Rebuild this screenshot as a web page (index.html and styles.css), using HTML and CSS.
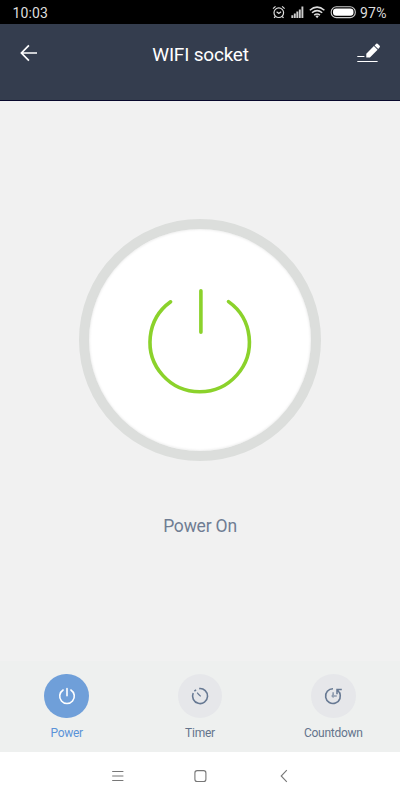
FILE: index.html
```html
<!DOCTYPE html>
<html lang="en">
<head>
  <meta charset="UTF-8" />
  <meta name="viewport" content="width=device-width, initial-scale=1.0"/>
  <title>WIFI socket</title>
  <link rel="stylesheet" href="styles.css">
</head>
<body>

  <div class="status-bar">
    <span class="time">10:03</span>
    <svg class="status-icons" width="84" height="24" viewBox="272 0 84 24" fill="none" stroke="#ddd">
      <!-- alarm -->
      <circle cx="278.8" cy="12.7" r="4.8" stroke-width="1.2"/>
      <path d="M276.6 11.7l2.2 1.8 2.3-1.8M273 8.6l2.5-2.2M284.6 8.6l-2.5-2.2M275.3 16.5l-1.2 1.4M282.3 16.5l1.2 1.4" stroke-width="1.2"/>
      <!-- signal -->
      <path d="M292.3 18v-2.7M294.8 18v-4.4M297.3 18v-6.4M299.8 18v-8.6M302.4 18V6.5" stroke="#ccc" stroke-width="1.9"/>
      <!-- wifi -->
      <path d="M309.8 10.3q7.3-6.4 14.6 0M312 12.8q5.1-4.4 10.2 0M314.2 15.2q2.9-2.4 5.8 0" stroke-width="1.5"/>
      <path d="M315.4 16.1q1.7-1.2 3.4 0l-1.7 2.1z" fill="#ddd" stroke="none"/>
      <!-- battery -->
      <rect x="331.2" y="6.8" width="24.1" height="10.8" rx="5.2" stroke="#ccc" stroke-width="1.1"/>
      <rect x="333" y="8.6" width="20.5" height="7.2" rx="3.2" fill="#fff" stroke="none"/>
    </svg>
    <span class="battery">97%</span>
  </div>

  <div class="header">
    <svg class="back" width="20" height="20" viewBox="0 0 20 20" fill="none" stroke="#fff" stroke-width="1.7">
      <path d="M9.9 2.3L2.4 10l7.5 7.7M2.6 10H18"/>
    </svg>
    <h1 class="title">WIFI socket</h1>
    <svg class="edit" width="26" height="24" viewBox="356 41 26 24" fill="#fff">
      <path d="M366.3 57.5v-3.8l7.6-7.7 3.7 3.7-7.7 7.8zM374.6 45.4l1.6-1.7q.7-.6 1.4 0l2.1 2.1q.6.7 0 1.4l-1.5 1.7z"/>
      <path d="M357.3 56h7.1v1.1h-7.1zM357.3 60.9h20.3V62h-20.3z"/>
    </svg>
  </div>

  <div class="main">
    <div class="power-button">
      <svg width="222" height="222" viewBox="89 229 222 222" fill="none" stroke="#8bd22b" stroke-width="3.6" stroke-linecap="round">
        <path d="M170.6 301.8A49.7 49.7 0 1 0 228.5 301.6M200.9 290.7V332.2"/>
      </svg>
    </div>
    <p class="power-state">Power On</p>
  </div>

  <div class="tabs">
    <div class="tab active">
      <div class="tab-icon">
        <svg width="24" height="24" viewBox="0 0 24 24" fill="none" stroke="#fff" stroke-width="1.6" stroke-linecap="round">
          <path d="M8.1 6A7.3 7.3 0 1 0 15.9 6M12 4.6V11.8"/>
        </svg>
      </div>
      <span>Power</span>
    </div>
    <div class="tab">
      <div class="tab-icon">
        <svg width="24" height="24" viewBox="0 0 24 24" fill="none" stroke="#677993" stroke-width="1.6">
          <path d="M11.2 4.6A7.5 7.5 0 1 1 5.2 9M6.4 7.3L8 5.7"/>
          <path d="M9.2 8.6l1.3 1.7 2.2 2.1" stroke-width="1.2"/>
        </svg>
      </div>
      <span>Timer</span>
    </div>
    <div class="tab">
      <div class="tab-icon">
        <svg width="24" height="24" viewBox="0 0 24 24" fill="none" stroke="#677993" stroke-width="1.6">
          <path d="M12 4.7A7.4 7.4 0 1 0 18.4 8.4"/>
          <path d="M16 10.2V5.6h4.8M16.2 5.8l3 3.8" stroke-width="1.5"/>
          <path d="M12.1 8.2v2.6M13.5 12h2.3" stroke-width="1.1"/>
          <circle cx="12.1" cy="12" r="1.1" stroke-width=".9"/>
        </svg>
      </div>
      <span>Countdown</span>
    </div>
  </div>

  <div class="nav-bar">
    <svg width="14" height="14" viewBox="0 0 14 14" fill="none" stroke="#777" stroke-width="1">
      <path d="M1.2 2.5h11.2M1.2 7h11.2M1.2 11.5h11.2"/>
    </svg>
    <svg width="14" height="14" viewBox="0 0 14 14" fill="none" stroke="#777" stroke-width="1.1">
      <rect x="0.9" y="1.6" width="11" height="10.9" rx="2.3"/>
    </svg>
    <svg width="14" height="14" viewBox="0 0 14 14" fill="none" stroke="#777" stroke-width="1.1">
      <path d="M10.8 1.2L5.2 7l5.6 5.8"/>
    </svg>
  </div>

</body>
</html>
```
FILE: styles.css
```css
* { margin: 0; padding: 0; box-sizing: border-box; font-family: Roboto, sans-serif; }
body {
  background: #f1f1f1;
  height: 100vh;
  display: flex;
  flex-direction: column;
  overflow: hidden;
}
svg {
  display: block;
  flex: none;
}
.status-bar {
  height: 24px;
  background: #000;
  color: #ddd;
  display: flex;
  align-items: center;
  padding: 1px 12px 0 12.5px;
  font-size: 14px;
}
.time {
  flex: 1;
  letter-spacing: 0.15px;
}
.status-icons {
  margin-top: -1px;
}
.battery {
  width: 28px;
  margin-left: 4px;
  letter-spacing: 0.2px;
}
.header {
  height: 77px;
  background: #343d4e;
  border-bottom: 1px solid #08082c;
  display: flex;
  align-items: flex-start;
  justify-content: space-between;
  padding: 17px 18px 0 19px;
}
.back {
  margin: 2px 6px 0 0;
}
.title {
  color: #fff;
  font-size: 19px;
  font-weight: 400;
  letter-spacing: -0.2px;
  line-height: 27px;
}
.main {
  flex: 1;
  display: flex;
  flex-direction: column;
  align-items: center;
  padding-top: 118px;
}
.power-button {
  width: 242px;
  height: 242px;
  border: 10px solid #dcdedc;
  border-radius: 50%;
  background: #fff;
  box-shadow: inset 0 0 3px rgba(0,0,0,0.12);
}
.power-state {
  margin-top: 54px;
  font-size: 17.5px;
  letter-spacing: -0.2px;
  line-height: 22px;
  color: #6f7d93;
}
.tabs {
  height: 91px;
  background: #eef0ef;
  display: flex;
  padding-top: 12.5px;
}
.tab {
  flex: 1;
  display: flex;
  flex-direction: column;
  align-items: center;
  font-size: 12px;
  letter-spacing: -0.25px;
  line-height: 16px;
  color: #64748c;
}
.tab-icon {
  width: 44.5px;
  height: 44.5px;
  border-radius: 50%;
  background: #e6e7ea;
  display: flex;
  align-items: center;
  justify-content: center;
  margin-bottom: 7px;
}
.active {
  color: #5b93d8;
}
.active .tab-icon {
  background: #6f9fd9;
}
.nav-bar {
  height: 48px;
  background: #fff;
  display: flex;
  justify-content: space-between;
  align-items: center;
  padding: 0 110px 0 111px;
}
```
